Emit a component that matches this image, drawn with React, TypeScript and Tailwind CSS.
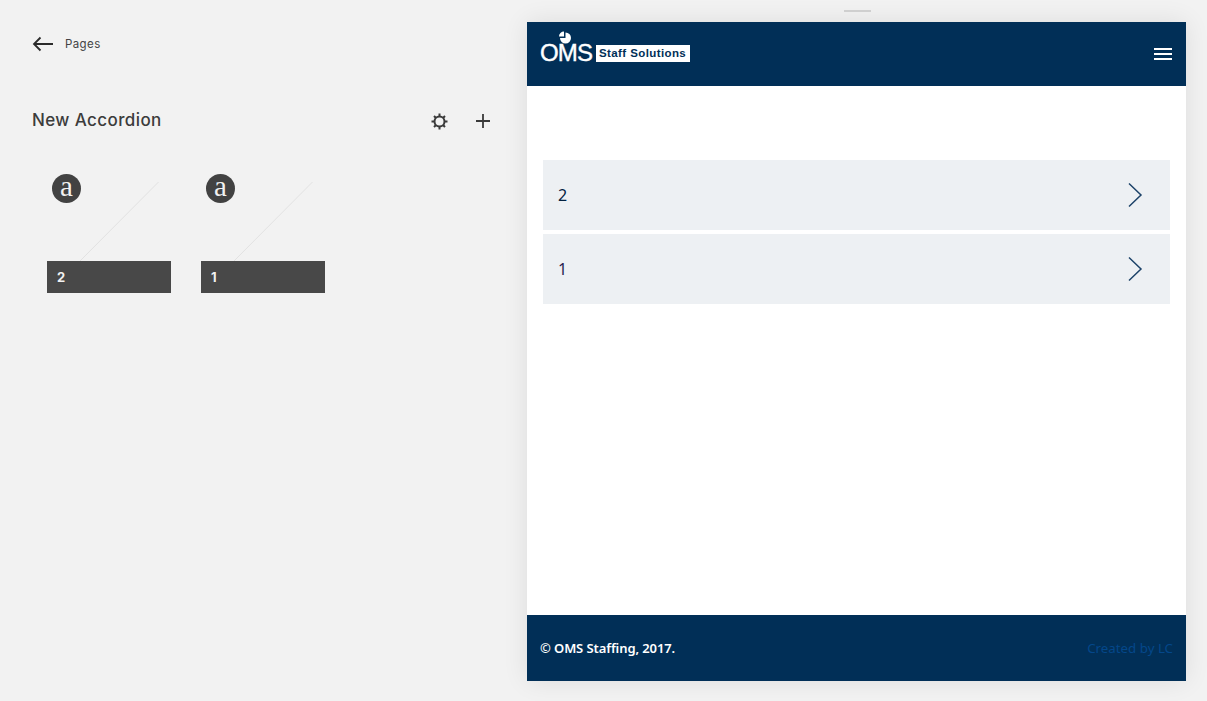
import React from 'react'

const sans = 'font-["Inter",sans-serif]'

function BlockCard({ label }: { label: string }) {
	return (
		<div className="relative w-[124px] h-[132px]">
			<svg className="absolute left-0 top-0" width="124" height="100" fill="none">
				<line x1="111.5" y1="21" x2="33" y2="100" stroke="#e2e2e2" strokeWidth="1" />
			</svg>
			<div className="absolute left-[5px] top-[13px] w-[29px] h-[29px] rounded-full bg-[#424242] flex items-center justify-center">
				<span className='font-["Liberation_Serif",serif] text-[29px] leading-none text-[#f1f1f1] -mt-[5px]'>a</span>
			</div>
			<div className="absolute left-0 bottom-0 w-full h-[32px] bg-[#484848] pl-[10px] pt-[1px] flex items-center">
				<span className={`${sans} text-[13px] font-bold text-[#f1f1f1]`}>{label}</span>
			</div>
		</div>
	)
}

function Row({ label, color }: { label: string; color: string }) {
	return (
		<div className="h-[70px] bg-[#edf0f3] flex items-center justify-between pl-[15px] pr-[27px]">
			<span className={`font-["Noto_Sans",sans-serif] text-[16px] ${color}`}>{label}</span>
			<svg width="16" height="26" viewBox="0 0 16 26" fill="none">
				<path d="M2 1.5L14 13L2 24.5" stroke="#1c4268" strokeWidth="1.5" />
			</svg>
		</div>
	)
}

export default function App() {
	return (
		<div className="w-[1207px] h-[701px] bg-[#f2f2f2] flex overflow-hidden relative">
			<div className="w-[527px] shrink-0 pl-[32px] pr-[35px] pt-[32px]">
				<div className="flex items-center h-[24px]">
					<svg width="22" height="16" viewBox="0 0 22 16" fill="none">
						<path d="M21 8H2M8.5 1.5L2 8L8.5 14.500" stroke="#2b2b2b" strokeWidth="1.8" />
					</svg>
					<span className={`${sans} ml-[11px] mt-[1px] text-[11.500px] tracking-[0.4px] text-[#444]`}>Pages</span>
				</div>
				<div className="flex items-center justify-between mt-[53px] h-[24px]">
					<h1 className={`${sans} text-[17px] font-medium tracking-[0.4px] text-[#3c3c3c]`}>New Accordion</h1>
					<div className="flex items-center gap-[27px] mr-[1px]">
						<svg width="17" height="17" viewBox="0 0 17 17" fill="none">
							<circle cx="8.500" cy="8.500" r="5" stroke="#3a3a3a" strokeWidth="2" />
							<path d="M8.500 0.500V3.500M8.500 13.500V16.500M0.500 8.500H3.500M13.500 8.500H16.500M3 3L5 5M12 12L14 14M3 14L5 12M12 5L14 3" stroke="#3a3a3a" strokeWidth="2" />
						</svg>
						<svg width="16" height="16" viewBox="0 0 16 16" fill="none">
							<path d="M8 1V15M1 8H15" stroke="#3a3a3a" strokeWidth="1.800" />
						</svg>
					</div>
				</div>
				<div className="flex gap-[30px] mt-[28px] ml-[15px]">
					<BlockCard label="2" />
					<BlockCard label="1" />
				</div>
			</div>

			<div className="w-[659px] h-[659px] mt-[22px] bg-white flex flex-col shadow-[0_0_24px_rgba(0,0,0,0.09)]">
				<header className="h-[64px] bg-[#012f57] flex items-center justify-between pl-[13px] pr-[14px]">
					<div className="relative flex items-end h-[31px] mb-[18px] mt-[3px]">
						<svg className="absolute left-[18px] top-0" width="14" height="14" viewBox="0 0 14 14">
							<path d="M7.500 1.500A5.500 5.500 0 1 1 2 7H7.500Z" fill="#fff" />
							<path d="M6 0.500V5.500H1A5 5 0 0 1 6 0.500Z" fill="#fff" />
						</svg>
						<span className='font-["Liberation_Sans",sans-serif] text-[24px] leading-[18px] tracking-[-0.8px] [-webkit-text-stroke:0.4px_white] text-white w-[56px] whitespace-nowrap'>OMS</span>
						<span className='font-["Liberation_Sans",sans-serif] font-bold bg-white text-[#012f57] text-[11.500px] leading-[17px] h-[17px] px-[3px] w-[94px] whitespace-nowrap tracking-[0.4px]'>Staff Solutions</span>
					</div>
					<div className="flex flex-col gap-[3px] w-[18px]">
						<div className="h-[2px] bg-white" />
						<div className="h-[2px] bg-white" />
						<div className="h-[2px] bg-white" />
					</div>
				</header>
				<main className="flex-1 px-[16px] pt-[74px] flex flex-col gap-[4px]">
					<Row label="2" color="text-[#01203f]" />
					<Row label="1" color="text-[#2a1f4f]" />
				</main>
				<footer className='h-[66px] bg-[#012f57] flex items-center justify-between pl-[13px] pr-[13px] pt-[1px] font-["Noto_Sans",sans-serif] text-[13px]'>
					<span className="font-semibold text-white tracking-[-0.1px]">© OMS Staffing, 2017.</span>
					<span className="text-[#04478a] text-[13.300px]">Created by LC</span>
				</footer>
			</div>

			<div className="absolute left-[844px] top-[10px] w-[27px] h-[2px] bg-[#cfcfcf]" />
		</div>
	)
}
